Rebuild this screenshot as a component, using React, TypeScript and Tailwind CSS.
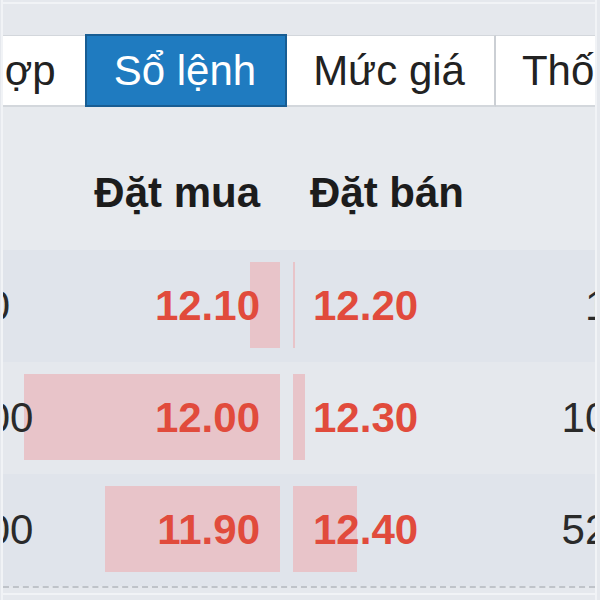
const tabs = [
  { label: "Tổng hợp", active: false },
  { label: "Sổ lệnh", active: true },
  { label: "Mức giá", active: false },
  { label: "Thống kê", active: false },
];

// bar widths are in px of the price cell
const rows = [
  { bidVol: "1,200", bid: "12.10", bidBar: 30, ask: "12.20", askBar: 2, askVol: "1,200", bg: "bg-[#e0e4eb]" },
  { bidVol: "10,200", bid: "12.00", bidBar: 256, ask: "12.30", askBar: 12, askVol: "10,600", bg: "bg-[#e5e8ed]" },
  { bidVol: "32,600", bid: "11.90", bidBar: 175, ask: "12.40", askBar: 64, askVol: "52,300", bg: "bg-[#e0e4eb]" },
];

export default function App() {
  return (
    <div className="h-[600px] w-[600px] overflow-hidden bg-[#e5e8ed] pl-[1px] pr-[3px] font-['Liberation_Sans',Arial,sans-serif]">
      <div className="flex h-full flex-col overflow-hidden border-x-2 border-[#f1f3f6]">
        <div className="h-[34px] shrink-0 pt-[2px]">
          <div className="border-t-2 border-[#f1f3f6]" />
        </div>

        <div className="-ml-[155px] flex h-[73px] shrink-0">
          {tabs.map((tab, i) =>
            tab.active ? (
              <div
                key={tab.label}
                className="flex shrink-0 items-center whitespace-nowrap border-2 border-[#185d93] bg-[#1f7bc0] pl-[27px] pr-[29px] text-[42px] text-white"
              >
                {tab.label}
              </div>
            ) : (
              <div
                key={tab.label}
                className={
                  "mt-[1px] flex shrink-0 items-center whitespace-nowrap border-t border-b-2 border-[#d3d7dc] bg-white pl-[26px] pr-[29px] text-[42px] text-[#222]" +
                  (i === 2 ? " border-r-2 border-r-[#cbcfd4]" : "")
                }
              >
                {tab.label}
              </div>
            )
          )}
        </div>

        <div className="-ml-[103px] flex h-[143px] shrink-0 items-end bg-[#e7eaee] pb-[33px] text-[42px] font-bold leading-[48px] text-[#1c1c1c]">
          <div className="w-[120px] shrink-0" />
          <div className="w-[260px] shrink-0 pr-[20px] text-right">Đặt mua</div>
          <div className="w-[13px] shrink-0" />
          <div className="w-[247px] shrink-0 pl-[17px] whitespace-nowrap">Đặt bán</div>
        </div>

        {rows.map((r) => (
          <div
            key={r.bid}
            className={`-ml-[103px] flex h-[112px] shrink-0 items-center text-[42px] leading-[48px] ${r.bg}`}
          >
            <div className="relative z-10 w-[120px] shrink-0 whitespace-nowrap pl-[5px] text-left text-[#2a2a2a]">
              {r.bidVol}
            </div>
            <div className="relative h-full w-[260px] shrink-0">
              <div
                className="absolute right-0 top-[12px] h-[86px] bg-[#e8c4c9]"
                style={{ width: r.bidBar }}
              />
              <div className="relative flex h-full items-center justify-end pr-[20px] font-bold text-[#e14b3c]">
                {r.bid}
              </div>
            </div>
            <div className="w-[13px] shrink-0" />
            <div className="relative h-full w-[247px] shrink-0">
              <div
                className="absolute left-0 top-[12px] h-[86px] bg-[#e8c4c9]"
                style={{ width: r.askBar }}
              />
              <div className="relative flex h-full items-center pl-[20px] font-bold text-[#e14b3c]">
                {r.ask}
              </div>
            </div>
            <div className="w-[150px] shrink-0 whitespace-nowrap text-right text-[#2a2a2a]">{r.askVol}</div>
          </div>
        ))}

        <div className="border-t-2 border-dashed border-[#bfc3c9]" />
        <div className="mt-[5px] border-t-2 border-[#f1f3f6]" />
      </div>
    </div>
  );
}
